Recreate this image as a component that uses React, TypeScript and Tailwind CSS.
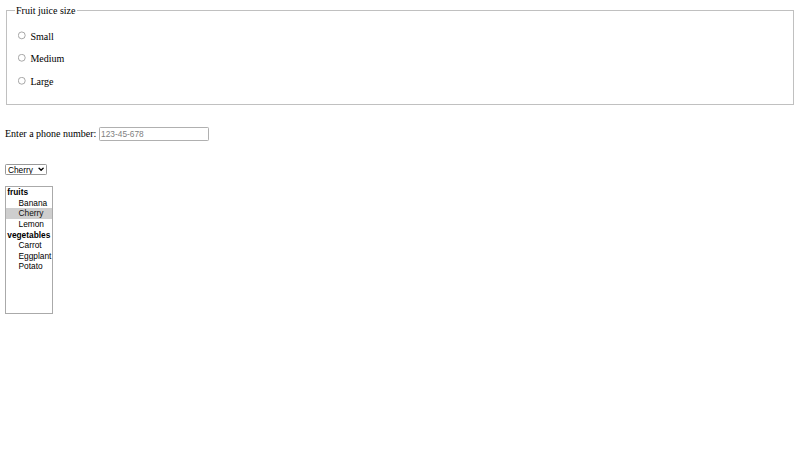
import React from 'react'

const SIZES = ['Small', 'Medium', 'Large']

const FRUITS = [
  { value: 'banana', label: 'Banana' },
  { value: 'cherry', label: 'Cherry' },
  { value: 'lemon', label: 'Lemon' },
]

const VEGETABLES = [
  { value: 'carrot', label: 'Carrot' },
  { value: 'eggplant', label: 'Eggplant' },
  { value: 'potato', label: 'Potato' },
]

const App: React.FC = () => {
  return (
    // the reference is a 1280-wide page shrunk to 800, so lay out at 1280 and zoom
    <div className="[zoom:0.625] bg-white p-2 font-['Liberation_Serif','Times_New_Roman',serif] text-base leading-[normal] text-black">
      <fieldset className="mx-[2px] border-2 border-[#c0c0c0] px-3 pt-[4.6px] pb-[10px]">
        <legend className="px-[2px]">Fruit juice size</legend>
        {SIZES.map((size) => (
          <p key={size} className="my-[17px]">
            <input
              type="radio"
              id={`size_${size}`}
              name="size"
              value={size}
              className="m-[3px_3px_0_5px] align-baseline"
            />{' '}
            <label htmlFor={`size_${size}`}>{size}</label>
          </p>
        ))}
      </fieldset>

      <p className="mt-[35px]">
        <label htmlFor="phone">Enter a phone number: </label>
        <input
          type="tel"
          id="phone"
          name="phone"
          placeholder="123-45-678"
          className="w-[177px] rounded-[2px] border border-[#b0b0b0] bg-white px-[2px] py-[2px] font-['Liberation_Sans',Arial,sans-serif] text-[13.333px] leading-[normal] placeholder:text-[#808080]"
        />
      </p>

      <div className="mt-[36px]">
        <div className="relative inline-block">
          <select
            defaultValue="cherry"
            className="block h-[19px] w-[67px] appearance-none rounded-[2px] border border-[#999999] bg-white pr-[16px] pl-[3px] font-['Liberation_Sans',Arial,sans-serif] text-[13.333px] leading-[normal]"
          >
            {FRUITS.map((f) => (
              <option key={f.value} value={f.value}>
                {f.label}
              </option>
            ))}
          </select>
          {/* dropdown chevron */}
          <svg
            viewBox="0 0 10 6"
            className="pointer-events-none absolute top-1/2 right-[5px] h-[6px] w-[10px] -translate-y-1/2"
          >
            <path d="M1 1l4 4 4-4" fill="none" stroke="#000" strokeWidth="2" />
          </svg>
        </div>
      </div>

      <div className="mt-[17px]">
        <select
          size={12}
          defaultValue="cherry"
          className="block h-[205px] w-[77px] border border-[#aaaaaa] bg-white font-['Liberation_Sans',Arial,sans-serif] text-[13.333px] leading-[normal] [&_option]:min-h-[17px]"
        >
          <optgroup label="fruits">
            {FRUITS.map((f) => (
              <option key={f.value} value={f.value}>
                {f.label}
              </option>
            ))}
          </optgroup>
          <optgroup label="vegetables">
            {VEGETABLES.map((v) => (
              <option key={v.value} value={v.value}>
                {v.label}
              </option>
            ))}
          </optgroup>
        </select>
      </div>
    </div>
  )
}

export default App
